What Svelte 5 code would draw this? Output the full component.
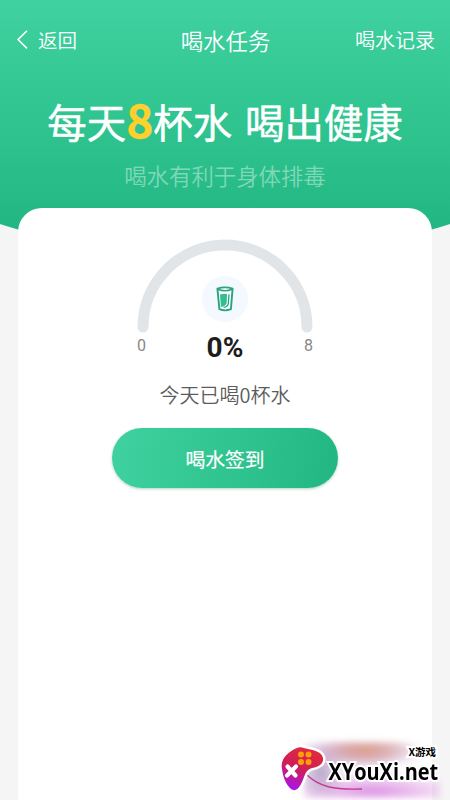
<script lang="ts">
  let cups = 0;
  const goal = 8;
  const arcLength = Math.PI * 82;

  $: ratio = Math.min(cups / goal, 1);
  $: percent = Math.round(ratio * 100);

  function checkIn() {
    if (cups < goal) cups += 1;
  }
</script>

<div class="page">
  <header>
    <nav>
      <div class="back">
        <svg width="12" height="20" viewBox="0 0 12 20">
          <path d="M11 0.8 L2 9.6 L11 18.4" fill="none" stroke="#fff" stroke-width="1.5" />
        </svg>
        <span>返回</span>
      </div>
      <div class="title">喝水任务</div>
      <div class="record">喝水记录</div>
    </nav>
    <h1>每天<b>{goal}</b>杯水<i></i>喝出健康</h1>
    <p>喝水有利于身体排毒</p>
  </header>

  <main>
    <div class="gauge">
      <svg class="arc" width="176" height="94" viewBox="0 0 176 94">
        <path class="track" d="M6 88 A82 82 0 0 1 170 88" />
        {#if cups > 0}
          <path
            class="bar"
            d="M6 88 A82 82 0 0 1 170 88"
            stroke-dasharray="{arcLength * ratio} {arcLength}"
          />
        {/if}
      </svg>
      <div class="cup">
        <svg width="20" height="28" viewBox="0 0 20 28">
          <path
            d="M2.4 3.6 Q10 1.2 17.6 3.6 L15.9 24.2 Q10 26.6 4.4 24.2 Z"
            fill="#fff"
            stroke="#25a67e"
            stroke-width="1.9"
            stroke-linejoin="round"
          />
          <path d="M2.8 4.3 Q10 7.2 17.2 4.3" fill="none" stroke="#25a67e" stroke-width="1.6" />
          <path d="M5 9.4 Q8.5 8.6 12 9 L11.7 18 Q10.5 21.6 5.9 22 Z" fill="#35bd91" />
          <path d="M14 9.4 L13.3 18.6 Q12.6 21.8 8.6 22.4" fill="none" stroke="#25a67e" stroke-width="1.3" />
        </svg>
      </div>
    </div>
    <div class="scale">
      <span>0</span>
      <strong>{percent}%</strong>
      <span>{goal}</span>
    </div>
    <div class="today">今天已喝{cups}杯水</div>
    <button on:click={checkIn}>喝水签到</button>
  </main>

  <div class="brand">
    <div class="glow"></div>
    <svg width="180" height="70" viewBox="0 0 180 70">
      <defs>
        <linearGradient id="pad" x1="0.7" y1="0" x2="0.3" y2="1">
          <stop offset="0" stop-color="#e32b3c" />
          <stop offset="0.5" stop-color="#d01e55" />
          <stop offset="1" stop-color="#a914ec" />
        </linearGradient>
      </defs>
      <path d="M36 44 C49 57 64 60 92 59" fill="none" stroke="#c43b91" stroke-width="1.4" />
      <path
        d="M27 18 C30 16 34 18 38 19 C44 20 52 22 53 28 C54 34 48 37 42 38 C35 40 35 46 32 52 C29 59 25 62 21 59 C16 55 13 47 12 39 C10 30 17 22 27 18 Z"
        fill="url(#pad)"
        stroke="#fff"
        stroke-width="5"
        stroke-linejoin="round"
        paint-order="stroke"
      />
      <path d="M17.5 36.5 L25.5 45.5 M26 36.5 L17 45.5" stroke="#fff" stroke-width="4.2" stroke-linecap="round" />
      <g fill="#ff9f0a">
        <circle cx="31" cy="24.5" r="3" />
        <circle cx="38.5" cy="24.5" r="3" />
        <circle cx="31" cy="32" r="3" />
        <circle cx="38.5" cy="32" r="3" />
      </g>
    </svg>
    <div class="names">
      <span class="small">X游戏</span>
      <span class="site">XYouXi.net</span>
    </div>
  </div>
</div>

<style>
  :global(body) {
    margin: 0;
    background: #f5f5f5;
  }

  .page {
    position: relative;
    display: flex;
    flex-direction: column;
    height: 800px;
    overflow: hidden;
    background: #f5f5f5;
    font-family: "Noto Sans CJK SC", sans-serif;
  }

  header {
    height: 260px;
    flex: none;
    color: #fff;
    background: linear-gradient(#3fd2a0, #22b782 230px);
    clip-path: ellipse(450px 258.6px at 50% 0);
  }

  nav {
    display: grid;
    grid-template-columns: 1fr auto 1fr;
    align-items: center;
    height: 79px;
    padding: 0 15px 0 16px;
    box-sizing: border-box;
    font-weight: 350;
  }

  .back {
    display: flex;
    align-items: center;
    gap: 10px;
    font-size: 19.5px;
  }

  .title {
    font-size: 22.4px;
  }

  .record {
    text-align: right;
    font-size: 20px;
  }

  h1 {
    display: flex;
    justify-content: center;
    align-items: baseline;
    height: 60px;
    margin: 9px 0 0;
    font-size: 39.4px;
    line-height: 60px;
    font-weight: 400;
    -webkit-text-stroke: 0.5px #fff;
  }

  h1 b {
    color: #ffd02b;
    font-size: 46px;
    font-weight: 700;
    -webkit-text-stroke: 0.4px #ffd02b;
  }

  h1 i {
    width: 13px;
  }

  header p {
    margin: 11px 0 0;
    text-align: center;
    font-size: 22.4px;
    line-height: 32px;
    font-weight: 350;
    color: rgba(255, 255, 255, 0.42);
  }

  main {
    position: relative;
    flex: 1;
    display: flex;
    flex-direction: column;
    align-items: center;
    margin: -52px 18px 0;
    padding-top: 31px;
    background: #fff;
    border-radius: 24px 24px 0 0;
  }

  .gauge {
    display: grid;
    justify-items: center;
    height: 94px;
  }

  .gauge > * {
    grid-area: 1 / 1;
  }

  .arc path {
    fill: none;
    stroke-width: 11;
    stroke-linecap: round;
  }

  .track {
    stroke: #e1e5e8;
  }

  .bar {
    stroke: #2dc291;
  }

  .cup {
    display: flex;
    align-items: center;
    justify-content: center;
    width: 46px;
    height: 46px;
    margin-top: 37px;
    border-radius: 50%;
    background: #f3f9fe;
  }

  .scale {
    display: flex;
    justify-content: space-between;
    width: 176px;
    height: 34px;
    font-family: Roboto, sans-serif;
    font-size: 16px;
    line-height: 26px;
    color: #888;
  }

  .scale strong {
    font-size: 28px;
    line-height: 30px;
    color: #1d1d1d;
  }

  .today {
    margin-top: 12px;
    font-size: 20px;
    line-height: 32px;
    font-weight: 350;
    color: #5c5c5c;
  }

  button {
    width: 226px;
    height: 60px;
    margin-top: 17px;
    padding: 0;
    border: none;
    border-radius: 30px;
    color: #fff;
    background: linear-gradient(100deg, #3fd2a0, #22b782);
    box-shadow: 0 1px 3px rgba(34, 120, 90, 0.35);
    font-family: inherit;
    font-size: 19.8px;
    font-weight: 400;
    -webkit-text-stroke: 0.2px #fff;
  }

  .brand {
    position: absolute;
    right: 0;
    bottom: 0;
    width: 180px;
    height: 70px;
  }

  .brand svg {
    position: relative;
    display: block;
  }

  .glow {
    position: absolute;
    left: 34px;
    top: 12px;
    width: 136px;
    height: 56px;
    background:
      radial-gradient(ellipse 50px 16px at 45% 14%, #dfa48c, transparent),
      radial-gradient(ellipse 70px 18px at 40% 18%, #bf95cf, transparent),
      radial-gradient(ellipse 26px 30px at 12% 55%, #b9a3c8, transparent),
      radial-gradient(ellipse 100px 20px at 50% 88%, #dc93e2, transparent);
    filter: blur(3px);
  }

  .names {
    position: absolute;
    right: 12px;
    top: 15px;
    display: flex;
    flex-direction: column;
    align-items: flex-end;
    color: #000;
    font-weight: 700;
    white-space: nowrap;
    -webkit-text-stroke: 4px #fff;
    paint-order: stroke fill;
  }

  .small {
    margin-right: 2px;
    font-size: 10.5px;
    line-height: 14px;
  }

  .site {
    font-family: "Open Sans", sans-serif;
    font-size: 24px;
    line-height: 24px;
    transform: scaleX(0.83);
    transform-origin: right;
  }
</style>
